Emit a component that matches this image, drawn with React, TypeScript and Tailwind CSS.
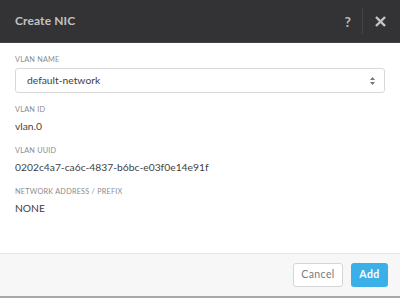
const Label = ({ children }: { children: string }) => (
  <div className="text-[7.3px] uppercase leading-[12px] tracking-[0.03em] text-[#8c8c8c]">{children}</div>
);

const Field = ({ label, value }: { label: string; value: string }) => (
  <div className="mb-[12px]">
    <Label>{label}</Label>
    <div className="mt-[3px] text-[10.3px] leading-[14px] text-[#3f3f3f]">{value}</div>
  </div>
);

export default function App() {
  return (
    <div className="flex h-[298px] w-[400px] flex-col bg-white font-['Lato',_'Noto_Sans',_sans-serif]">
      {/* Header */}
      <div className="flex h-[43px] items-center border-b border-[#444] bg-[#333335] pl-[15px]">
        <h3 className="flex-1 text-[12px] font-bold tracking-[0.01em] text-[#c2c2c2]">Create NIC</h3>
        <div className="flex h-full items-center pr-[2px]">
          <span className="px-[11px] text-[14px] font-bold text-[#bdbdbd]">?</span>
          <div className="h-[26px] w-px bg-[#444446]" />
          <span className="flex w-[35px] justify-center">
            <svg width="11" height="11" viewBox="0 0 12 12" fill="none" stroke="#c4c4c4" strokeWidth="2.6" strokeLinecap="square">
              <path d="M2 2 L10 10 M10 2 L2 10" />
            </svg>
          </span>
        </div>
      </div>

      {/* Body */}
      <div className="flex-1 px-[15px] pt-[11px]">
        <Label>VLAN Name</Label>
        <div className="mt-[2px] mb-[11px] flex h-[25px] items-center rounded-[3px] border border-[#d8d8d8] bg-white pl-[11px] pr-[9px]">
          <span className="flex-1 text-[10.3px] text-[#3f3f3f]">default-network</span>
          <svg width="5" height="8" viewBox="0 0 5 8" fill="#777">
            <path d="M2.5 0 L5 3 L0 3 Z M0 5 L5 5 L2.5 8 Z" />
          </svg>
        </div>
        <Field label="VLAN ID" value="vlan.0" />
        <Field label="VLAN UUID" value="0202c4a7-ca6c-4837-b6bc-e03f0e14e91f" />
        <Field label="Network Address / Prefix" value="NONE" />
      </div>

      {/* Footer */}
      <div className="flex h-[45px] items-center justify-end gap-[8px] border-t border-b-[2px] border-t-[#e6e6e6] border-b-[#a8a8a8] bg-[#f7f7f7] pr-[12px]">
        <button className="h-[24px] w-[50px] rounded-[3px] border border-[#d6d6d6] bg-white text-[10.5px] tracking-[0.04em] text-[#7a7a7a]">Cancel</button>
        <button className="h-[24px] w-[37px] rounded-[3px] bg-[#3bb0e8] text-[10.5px] font-bold tracking-[0.04em] text-white">Add</button>
      </div>
    </div>
  );
}
